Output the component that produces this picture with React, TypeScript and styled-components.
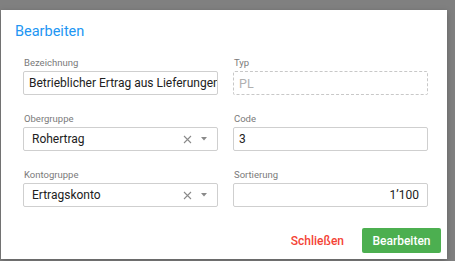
import React from "react";
import styled, { createGlobalStyle, css } from "styled-components";

const Global = createGlobalStyle`
  html, body { margin: 0; padding: 0; }
  body {
    background: #808080;
    font-family: Roboto, "Noto Sans", Arial, sans-serif;
    overflow: hidden;
  }
`;

const Overlay = styled.div`
  width: 455px;
  height: 261px;
  padding: 10px 0 0 1px;
  box-sizing: border-box;
  background: #808080;
`;

const Dialog = styled.div`
  width: 446px;
  height: 249px;
  background: #fff;
  box-sizing: border-box;
  padding: 12px 6px 6px 14px;
  display: flex;
  flex-direction: column;
  box-shadow: 0 2px 6px rgba(0, 0, 0, 0.25);
`;

const Title = styled.h2`
  margin: 0;
  font-size: 14.5px;
  font-weight: 400;
  color: #2196f3;
  line-height: 19px;
`;

const Grid = styled.div`
  display: grid;
  grid-template-columns: 195px 195px;
  column-gap: 15px;
  row-gap: 18px;
  margin: 16px 0 0 8px;
`;

const Field = styled.div`
  display: flex;
  flex-direction: column;
`;

const Label = styled.label`
  font-size: 9.5px;
  color: #7a7a7a;
  line-height: 11px;
  margin: 0 0 3px 1px;
`;

const Box = styled.div<{ $dashed?: boolean; $align?: "left" | "right" }>`
  height: 24px;
  box-sizing: border-box;
  border: 1px solid #cfcfcf;
  border-radius: 2px;
  display: flex;
  align-items: center;
  padding: 0 0 0 4px;
  font-size: 12px;
  color: #212121;
  justify-content: ${(p) => (p.$align === "right" ? "flex-end" : "flex-start")};
  white-space: nowrap;
  overflow: hidden;
  ${(p) =>
    p.$dashed &&
    css`
      border: 1px dashed #c8c8c8;
      color: #b0b0b0;
      font-size: 12.5px;
    `}
`;

const Value = styled.span`
  flex: 1;
  overflow: hidden;
  padding-left: 1px;
`;

const SelectValue = styled(Value)`
  padding-left: 4px;
`;

const Right = styled.span`
  padding-right: 8px;
`;

const Icons = styled.span`
  display: flex;
  align-items: center;
  gap: 9px;
  padding-right: 10px;
`;

const Footer = styled.div`
  margin-top: auto;
  display: flex;
  justify-content: flex-end;
  align-items: center;
  gap: 18px;
`;

const TextButton = styled.button`
  border: none;
  background: none;
  color: #f44336;
  font-family: inherit;
  font-size: 12px;
  font-weight: 500;
  padding: 0;
  cursor: pointer;
`;

const PrimaryButton = styled.button`
  border: none;
  background: #4caf50;
  color: #fff;
  font-family: inherit;
  font-size: 12px;
  font-weight: 500;
  width: 79px;
  height: 25px;
  border-radius: 2px;
  cursor: pointer;
`;

const ClearIcon = () => (
  <svg width="9" height="9" viewBox="0 0 9 9">
    <path d="M1 1L8 8M8 1L1 8" stroke="#8a8a8a" strokeWidth="1.1" />
  </svg>
);

const Caret = () => (
  <svg width="6" height="4" viewBox="0 0 6 4">
    <path d="M0 0H6L3 3.5Z" fill="#8a8a8a" />
  </svg>
);

const Select = ({ value }: { value: string }) => (
  <Box>
    <SelectValue>{value}</SelectValue>
    <Icons>
      <ClearIcon />
      <Caret />
    </Icons>
  </Box>
);

export default function App() {
  return (
    <>
      <Global />
      <Overlay>
        <Dialog>
          <Title>Bearbeiten</Title>
          <Grid>
            <Field>
              <Label>Bezeichnung</Label>
              <Box>
                <Value>Betrieblicher Ertrag aus Lieferungen</Value>
              </Box>
            </Field>
            <Field>
              <Label>Typ</Label>
              <Box $dashed>
                <Value>PL</Value>
              </Box>
            </Field>
            <Field>
              <Label>Obergruppe</Label>
              <Select value="Rohertrag" />
            </Field>
            <Field>
              <Label>Code</Label>
              <Box>
                <Value>3</Value>
              </Box>
            </Field>
            <Field>
              <Label>Kontogruppe</Label>
              <Select value="Ertragskonto" />
            </Field>
            <Field>
              <Label>Sortierung</Label>
              <Box $align="right">
                <Right>1’100</Right>
              </Box>
            </Field>
          </Grid>
          <Footer>
            <TextButton>Schließen</TextButton>
            <PrimaryButton>Bearbeiten</PrimaryButton>
          </Footer>
        </Dialog>
      </Overlay>
    </>
  );
}
